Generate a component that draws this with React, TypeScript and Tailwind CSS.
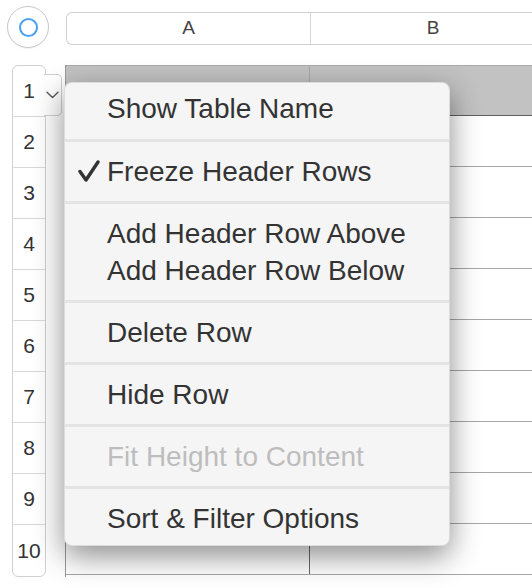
import { ReactNode } from "react";

const rows = [1, 2, 3, 4, 5, 6, 7, 8, 9, 10];

function Section({ children, first, last }: { children: ReactNode; first?: boolean; last?: boolean }) {
  return (
    <div
      className={`flex flex-col ${first ? "pt-[7px] pb-[12px]" : last ? "pt-[11px] pb-[8px]" : "py-[11px]"}`}
    >
      {children}
    </div>
  );
}

function Item({ label, checked, disabled }: { label: string; checked?: boolean; disabled?: boolean }) {
  return (
    <div className="relative h-[37px] flex items-center pl-[42px]">
      {checked && (
        <svg
          className="absolute left-[12px] top-[7px]"
          width="24"
          height="24"
          viewBox="0 0 24 24"
          fill="none"
        >
          <path
            d="M3 11.5 L9 20 L21 2"
            stroke="#333"
            strokeWidth="3.4"
            strokeLinecap="round"
            strokeLinejoin="round"
          />
        </svg>
      )}
      <span className={disabled ? "text-[#bdbdbd]" : "text-[#333333]"}>{label}</span>
    </div>
  );
}

function Sep() {
  return <div className="h-[3px] bg-[#e4e4e4]" />;
}

export default function App() {
  return (
    <div className="relative w-[532px] h-[588px] overflow-hidden bg-white font-['Liberation_Sans',Arial,sans-serif]">
      {/* toolbar row */}
      <div className="flex items-start pl-[7px] pt-[6px]">
        <div className="w-[42px] h-[42px] shrink-0 rounded-full border border-[#c9c9c9] bg-white flex items-center justify-center shadow-[0_1px_1px_rgba(0,0,0,0.05)]">
          <div className="w-[19px] h-[19px] rounded-full border-2 border-[#47a1f5]" />
        </div>
        <div className="ml-[17px] mt-[6px] h-[33px] w-[520px] shrink-0 flex border border-r-0 border-[#d0d0d0] rounded-l-[6px] text-[19px] text-[#444]">
          <div className="w-[244px] flex items-center justify-center border-r border-[#d6d6d6]">A</div>
          <div className="w-[244px] flex items-center justify-center">B</div>
        </div>
      </div>

      {/* body */}
      <div className="flex mt-[17px] pl-[12px]">
        {/* row headers */}
        <div className="relative w-[34px] shrink-0 flex flex-col border border-[#d0d0d0] rounded-[6px] bg-white text-[21px] text-[#333]">
          {rows.map((r, i) => (
            <div
              key={r}
              className={`h-[51px] shrink-0 flex items-center justify-center ${i < rows.length - 1 ? "border-b border-[#d8d8d8]" : "h-[50px]"}`}
            >
              {r}
            </div>
          ))}
          <div className="absolute left-[31px] top-[8px] w-[18px] h-[42px] bg-white border border-l-0 border-[#cfcfcf] rounded-r-[5px] flex items-center justify-center">
            <svg width="13" height="8" viewBox="0 0 13 8" fill="none">
              <path d="M1 1.2 L6.5 6.6 L12 1.2" stroke="#5a5a5a" strokeWidth="1.4" strokeLinecap="round" strokeLinejoin="round" />
            </svg>
          </div>
        </div>

        {/* table */}
        <div className="ml-[19px] w-[480px] shrink-0 flex flex-col border-l border-[#9a9a9a]">
          <div className="h-[51px] flex bg-[#c1c2c1] border-t border-[#a9a9a9] border-b border-b-[#606060]">
            <div className="w-[244px] border-r border-[#a8a8a8]" />
            <div className="flex-1" />
          </div>
          {rows.slice(1).map((r) => (
            <div key={r} className="h-[51px] flex border-b border-[#a6a6a6]">
              <div className="w-[244px] border-r border-[#6a6a6a]" />
              <div className="flex-1" />
            </div>
          ))}
        </div>
      </div>

      {/* context menu */}
      <div className="absolute left-[64px] top-[82px] w-[386px] flex flex-col bg-[#f5f5f5] rounded-[8px] border border-black/10 shadow-[0_10px_30px_rgba(0,0,0,0.45)] text-[28px] leading-none">
        <Section first>
          <Item label="Show Table Name" />
        </Section>
        <Sep />
        <Section>
          <Item label="Freeze Header Rows" checked />
        </Section>
        <Sep />
        <Section>
          <Item label="Add Header Row Above" />
          <Item label="Add Header Row Below" />
        </Section>
        <Sep />
        <Section>
          <Item label="Delete Row" />
        </Section>
        <Sep />
        <Section>
          <Item label="Hide Row" />
        </Section>
        <Sep />
        <Section>
          <Item label="Fit Height to Content" disabled />
        </Section>
        <Sep />
        <Section last>
          <Item label="Sort & Filter Options" />
        </Section>
      </div>
    </div>
  );
}
